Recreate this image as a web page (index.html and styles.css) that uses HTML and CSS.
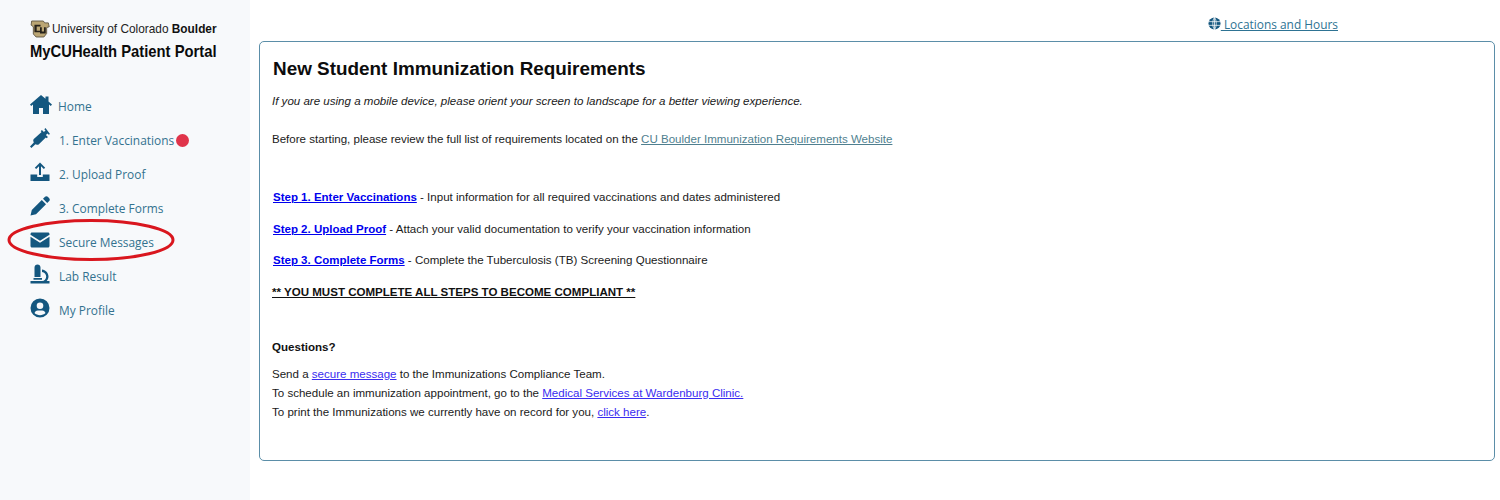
FILE: index.html
```html
<!DOCTYPE html>
<html lang="en">
<head>
<meta charset="utf-8">
<title>MyCUHealth Patient Portal</title>
<link rel="stylesheet" href="styles.css">
</head>
<body>
<div class="app">
  <aside class="sidebar">
    <div class="brand">
      <div class="brand-top">
        <svg class="cu-logo" viewBox="0 0 18 16" aria-hidden="true"><path d="M1.500.8h10.500l1.200 1.700h3.300l.8 3.500-2.300.7V12l-2.500 3.200H5.500L3 12.500V6L1 4.500z" fill="#bba674" stroke="#5c5442" stroke-width=".8"/><path d="M4 4.200h5.500v1.600H6v3.700h3.500V11H4zM9 6.500h1.600v3.700h2V6.500h1.600V12H9z" fill="#26221b"/></svg>
        <span class="brand-uni">University of Colorado <b>Boulder</b></span>
      </div>
      <div class="brand-title">MyCUHealth Patient Portal</div>
    </div>
    <nav class="nav">
      <a class="nav-item" href="#"><svg class="ico ico-home" viewBox="0 0 22 19"><path d="M11 0 0 9.500l1.200 1.400L3 9.400V19h6v-6h4v6h6V9.400l1.800 1.500L22 9.500 18.500 6.400V1.500h-3v2.300z"/></svg><span>Home</span></a>
      <a class="nav-item" href="#"><svg class="ico" viewBox="0 0 20 20"><path d="M15.500 0 14.300 1.200l1.200 1.200-1.600 1.600-2-2-1.200 1.200.9.900L3.800 11c-.6.600-.7 1.300-.5 2l.5 1.500L0 18.500 1.400 20l4-3.800 1.500.5c.7.200 1.400.1 2-.5l6.900-6.800.9.900 1.200-1.200-2-2 1.600-1.600 1.200 1.200L20 6z"/></svg><span>1. Enter Vaccinations</span><i class="dot"></i></a>
      <a class="nav-item" href="#"><svg class="ico" viewBox="0 0 20 20"><path d="M10 .5 4.800 5.700l1.400 1.400L9 4.300V13h2V4.300l2.800 2.800 1.400-1.400zM.5 12.500h6.700V15h5.600v-2.500h6.700V19H.5z"/></svg><span>2. Upload Proof</span></a>
      <a class="nav-item" href="#"><svg class="ico" viewBox="0 0 20 20"><path d="M15 .8c.8-.8 2-.8 2.800 0l1.400 1.400c.8.800.8 2 0 2.800l-2 2L13 2.800zM11.800 4 16 8.200 6 18.200.5 19.500 1.800 14z"/></svg><span>3. Complete Forms</span></a>
      <a class="nav-item" href="#"><svg class="ico" viewBox="0 0 20 20"><path d="M2 2.500h16c.8 0 1.500.7 1.500 1.500v.7L10 10.800.5 4.700V4c0-.8.7-1.500 1.500-1.500zM.5 6.700 10 12.800l9.500-6.100V16c0 .8-.7 1.500-1.500 1.500H2c-.8 0-1.500-.7-1.500-1.500z"/></svg><span>Secure Messages</span></a>
      <a class="nav-item" href="#"><svg class="ico" viewBox="0 0 20 20"><path d="M7.500.5c1.700 0 3 1.300 3 3V13h-6V3.500c0-1.700 1.300-3 3-3zM12 5.500c3.600.6 6.500 3.300 6.500 7 0 1.800-.7 3.300-1.800 4.500h2.800v2.500H.5V17h11.500c2.300 0 4.200-2 4.200-4.500 0-2.300-1.800-4.200-4.200-4.600zM3.500 14h8.500v1.800H3.500z"/></svg><span>Lab Result</span></a>
      <a class="nav-item" href="#"><svg class="ico" viewBox="0 0 20 20"><path fill-rule="evenodd" d="M10 .5a9.500 9.500 0 1 0 0 19 9.500 9.500 0 0 0 0-19zM10 4.500a3.300 3.300 0 1 1 0 6.600 3.300 3.300 0 0 1 0-6.600zM4.500 15c.7-1.700 2-2.500 3.200-2.500h4.600c1.200 0 2.500.8 3.200 2.500-1.400 1.400-3.400 2.200-5.500 2.200s-4.100-.8-5.500-2.200z"/></svg><span>My Profile</span></a>
    </nav>
    <svg class="circle" viewBox="0 0 170 44" aria-hidden="true"><ellipse cx="84" cy="22" rx="82" ry="19.500" fill="none" stroke="#d9161e" stroke-width="3"/></svg>
  </aside>
  <main class="main">
    <div class="topbar">
      <a class="loc" href="#"><svg class="globe" viewBox="0 0 14 14"><circle cx="7" cy="7" r="6.500" fill="#14577f"/><path d="M.5 5h13M.5 9h13M7 .5v13M7 .5C4.500 3 4.500 11 7 13.500M7 .5C9.500 3 9.500 11 7 13.500" stroke="#fff" stroke-width=".8" fill="none"/></svg> Locations and Hours</a>
    </div>
    <section class="card">
      <h1>New Student Immunization Requirements</h1>
      <p class="note">If you are using a mobile device, please orient your screen to landscape for a better viewing experience.</p>
      <p class="intro">Before starting, please review the full list of requirements located on the <a class="muted" href="#">CU Boulder Immunization Requirements Website</a></p>
      <p class="step first"><a class="step-link" href="#">Step 1. Enter Vaccinations</a> - Input information for all required vaccinations and dates administered</p>
      <p class="step"><a class="step-link" href="#">Step 2. Upload Proof</a> - Attach your valid documentation to verify your vaccination information</p>
      <p class="step"><a class="step-link" href="#">Step 3. Complete Forms</a> - Complete the Tuberculosis (TB) Screening Questionnaire</p>
      <p class="step must">** YOU MUST COMPLETE ALL STEPS TO BECOME COMPLIANT **</p>
      <p class="questions">Questions?</p>
      <div class="contact">
        <div>Send a <a href="#">secure message</a> to the Immunizations Compliance Team.</div>
        <div>To schedule an immunization appointment, go to the <a href="#">Medical Services at Wardenburg Clinic.</a></div>
        <div>To print the Immunizations we currently have on record for you, <a href="#">click here</a>.</div>
      </div>
    </section>
  </main>
</div>
</body>
</html>
```
FILE: styles.css
```css
* { box-sizing: border-box; }
html, body { margin: 0; height: 100%; background: #fff; overflow: hidden; }
body { font-family: "Liberation Sans", Arial, sans-serif; font-size: 11.550px; color: #1a1a1a; }
.app { display: flex; height: 500px; }

.sidebar { position: relative; width: 250px; flex: none; background: #f7f9fb; padding: 20px 0 0 30px; }
.brand-top { display: flex; align-items: center; gap: 2px; height: 18px; }
.cu-logo { width: 20px; height: 18px; flex: none; }
.brand-uni { font-size: 11.850px; color: #222; white-space: nowrap; }
.brand-uni b { color: #111; }
.brand-title { font-size: 17px; font-weight: 700; color: #0b0b0b; white-space: nowrap; margin-top: 5px; line-height: 18px; transform-origin: left; transform: scaleX(.87); }

.nav { display: flex; flex-direction: column; margin-top: 28px; }
.nav-item { display: flex; align-items: center; height: 34px; color: #33728f; text-decoration: none; font-family: "Open Sans", sans-serif; font-size: 11.900px; white-space: nowrap; }
.ico { width: 20px; height: 20px; flex: none; fill: #14577f; margin-right: 9px; position: relative; top: -2px; }
.ico-home { width: 22px; height: 19px; margin-right: 6px; }
.dot { width: 13px; height: 13px; border-radius: 50%; background: #e0344a; margin-left: 2px; }
.circle { position: absolute; left: 7px; top: 218px; width: 170px; height: 44px; }

.main { flex: 1; min-width: 0; padding: 0 5px 0 9px; }
.topbar { height: 41px; display: flex; justify-content: flex-end; padding: 16px 157px 0 0; }
.loc { color: #2e7393; font-family: "Open Sans", sans-serif; font-size: 11.900px; line-height: 16px; white-space: pre; }
.globe { width: 13px; height: 13px; vertical-align: -1px; }

.card { height: 420px; border: 1px solid #5b8ea8; border-radius: 5px; padding: 15px 12px; }
h1 { margin: 0 0 0 1px; font-size: 18.900px; line-height: 24px; font-weight: 700; color: #0c0c0c; }
p { margin: 0; line-height: 15px; }
.note { font-style: italic; margin-top: 13px; }
.intro { margin-top: 23px; }
.muted { color: #4f7f8f; }
.step { margin-top: 16.500px; }
.step.first { margin-top: 43px; }
.step-link { font-weight: 700; font-size: 11.500px; color: #0000ee; margin-left: 1px; }
.must { font-weight: 700; text-decoration: underline; color: #111; margin-top: 17px; }
.questions { font-weight: 700; margin-top: 40px; color: #111; }
.contact { margin-top: 9.500px; line-height: 19px; }
.contact a { color: #3a2cf0; }
```
